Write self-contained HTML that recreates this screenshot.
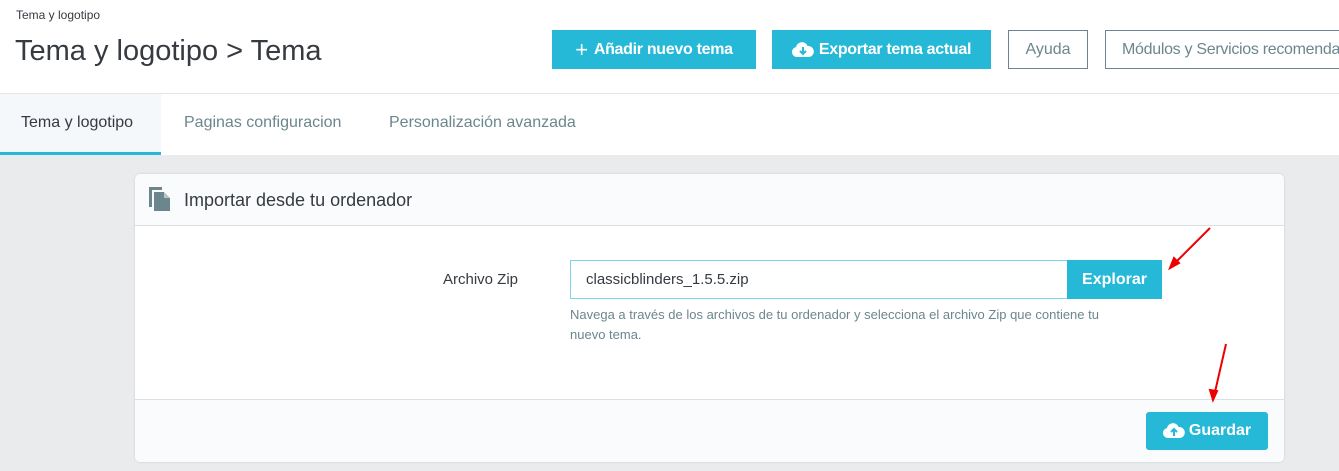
<!DOCTYPE html>
<html><head><meta charset="utf-8"><style>
*{margin:0;padding:0;box-sizing:border-box}
body{width:1339px;height:471px;overflow:hidden;background:#eaebed;font-family:"Liberation Sans",sans-serif;position:relative}
.top{position:absolute;left:0;top:0;width:1339px;height:155px;background:#fff}
.abs{position:absolute;white-space:nowrap}
.btn{position:absolute;height:39px;font-size:16px;font-weight:bold;display:flex;align-items:center;justify-content:center;white-space:nowrap;overflow:hidden}
.blue{background:#25b9d7;color:#fff}
.out{border:1px solid #6c868e;color:#6c868e;background:#fff;font-weight:normal}
</style></head><body>
<div class="top"></div>
<div class="abs" style="left:16px;top:8px;font-size:12px;color:#363a41">Tema y logotipo</div>
<div class="abs" style="left:15px;top:35px;font-size:29px;color:#363a41">Tema y logotipo &gt; Tema</div>
<div class="btn blue" style="left:552px;top:30px;width:204px;letter-spacing:-0.3px"><span style="font-size:22px;font-weight:normal;margin-right:6px">+</span>Añadir nuevo tema</div>
<div class="btn blue" style="left:772px;top:30px;width:219px;letter-spacing:-0.3px"><svg width="22" height="16" viewBox="0 0 22 16" style="margin-right:5px"><path d="M5 15a5 5 0 0 1-1-9.9A6 6 0 0 1 15.5 4 5.5 5.5 0 0 1 17 15z" fill="#fff"/><path d="M11 5v6M8 9l3 3 3-3" stroke="#25b9d7" stroke-width="2" fill="none"/></svg>Exportar tema actual</div>
<div class="btn out" style="left:1008px;top:30px;width:80px">Ayuda</div>
<div class="btn out" style="left:1105px;top:30px;width:260px;justify-content:flex-start;padding-left:16px;letter-spacing:-0.3px">Módulos y Servicios recomendados</div>
<div style="position:absolute;left:0;top:93px;width:1339px;height:1px;background:#e2e4e6"></div>
<div class="abs" style="left:0;top:94px;width:161px;height:61px;background:#f4f8fa;border-bottom:3px solid #25b9d7"></div>
<div class="abs" style="left:21px;top:114px;font-size:16px;color:#363a41">Tema y logotipo</div>
<div class="abs" style="left:184px;top:114px;font-size:16px;color:#6c868e">Paginas configuracion</div>
<div class="abs" style="left:389px;top:114px;font-size:16px;color:#6c868e">Personalización avanzada</div>
<div style="position:absolute;left:135px;top:174px;width:1149px;height:288px;background:#fff;border-radius:5px;box-shadow:0 0 2px rgba(0,0,0,.15);overflow:hidden">
<div style="height:52px;background:#fafbfc;border-bottom:1px solid #dbe0e4"></div>
<div style="position:absolute;left:0;top:225px;width:100%;height:63px;background:#fafbfc;border-top:1px solid #dbe0e4"></div>
</div>
<svg class="abs" style="left:148px;top:186px" width="24" height="26" viewBox="0 0 24 26"><path d="M1 2h3v19h-3z M1 1h13v3h-13z" fill="#6c868e"/><path d="M6 6h10l6 6v13h-16z" fill="#6c868e"/><path d="M16 6v6h6" fill="#fff" opacity=".5"/></svg>
<div class="abs" style="left:184px;top:190px;font-size:18px;color:#363a41">Importar desde tu ordenador</div>
<div class="abs" style="left:443px;top:271px;font-size:15px;color:#363a41">Archivo Zip</div>
<div class="abs" style="left:570px;top:260px;width:498px;height:39px;border:1px solid #7cd5e7;background:#fff;font-size:15px;color:#363a41;padding:10px 15px">classicblinders_1.5.5.zip</div>
<div class="btn blue" style="left:1067px;top:260px;width:95px;height:39px">Explorar</div>
<div class="abs" style="left:570px;top:305px;font-size:13px;color:#6c868e;line-height:20px">Navega a través de los archivos de tu ordenador y selecciona el archivo Zip que contiene tu<br>nuevo tema.</div>
<div class="btn blue" style="left:1146px;top:412px;width:122px;height:38px;border-radius:3px"><svg width="22" height="16" viewBox="0 0 22 16" style="margin-right:4px"><path d="M5 15a5 5 0 0 1-1-9.9A6 6 0 0 1 15.5 4 5.5 5.5 0 0 1 17 15z" fill="#fff"/><path d="M11 13V7M8 9l3-3 3 3" stroke="#25b9d7" stroke-width="2" fill="none"/></svg>Guardar</div>
<svg class="abs" style="left:0;top:0" width="1339" height="471"><g stroke="#e00" stroke-width="2" fill="#e00"><line x1="1210" y1="228" x2="1176" y2="262"/><path d="M1170 268l4-10 5 5z"/><line x1="1226" y1="344" x2="1215" y2="392"/><path d="M1213 400l-3-10 7 1z"/></g></svg>
</body></html>
